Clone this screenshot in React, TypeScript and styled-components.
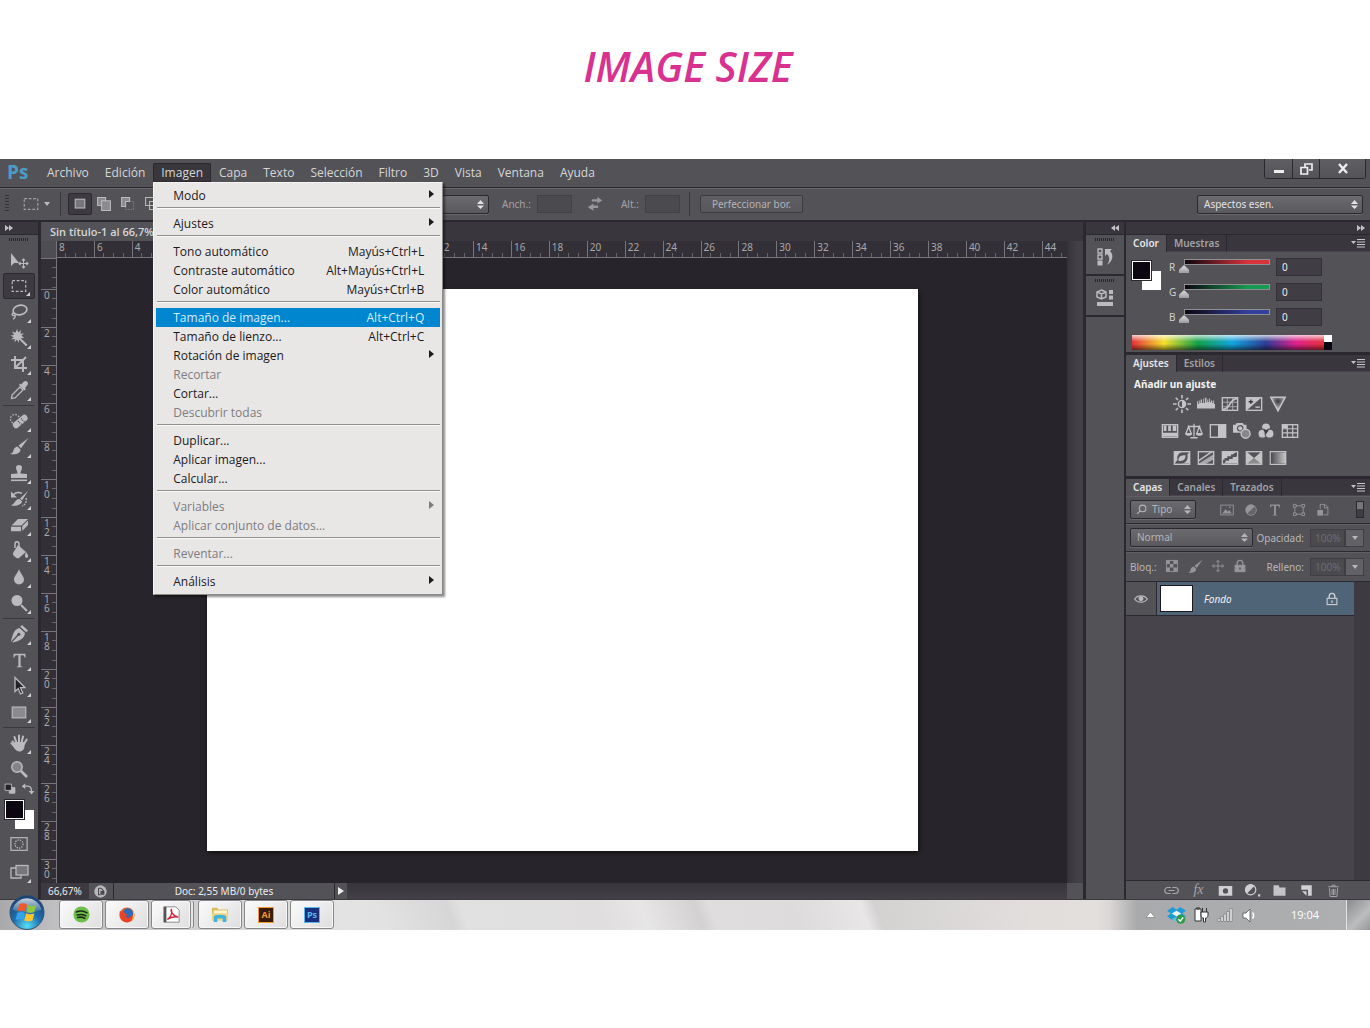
import React from "react";
import styled, { createGlobalStyle, css } from "styled-components";

const c = {
  panel: "#535257",
  panelDark: "#39373d",
  edge: "#2b292f",
  light: "#6a696e",
  stage: "#28242b",
  text: "#d6d6d8",
  dim: "#a3a2a6",
  icon: "#bbbbbe",
  menu: "#e9e7e6",
  accent: "#0086cf",
};

const ui = `"Open Sans", "Noto Sans", sans-serif`;
const small = `"Noto Sans", "Open Sans", sans-serif`;

const GlobalStyle = createGlobalStyle`
  *, *::before, *::after { box-sizing: border-box; }
  body { margin: 0; background: #fff; font-family: ${ui}; }
  button, input, select { font: inherit; color: inherit; margin: 0; padding: 0; border: 0; border-radius: 0; background: none; }
  svg { display: block; flex: none; }
`;

const Title = styled.h1`
  margin: 0;
  padding: 42px 0 69px 6px;
  text-align: center;
  font: italic 600 41px/48px ${ui};
  color: #d9318f;
`;

const AppWindow = styled.main`
  display: flex;
  flex-direction: column;
  background: ${c.panel};
  color: ${c.text};
`;

/* ---------- menu bar ---------- */
const MenuBar = styled.header`
  display: flex;
  height: 29px;
  border-bottom: 1px solid ${c.edge};
`;
const Logo = styled.span`
  width: 39px;
  padding-left: 7px;
  font: 700 19px/26px ${ui};
  color: #4b9dc5;
`;
const MenuNav = styled.nav`
  display: flex;
  align-items: flex-start;
  padding-top: 4px;
`;
const MenuSlot = styled.div`
  position: relative;
`;
const MenuButton = styled.button<{ $open?: boolean }>`
  display: block;
  height: 19px;
  padding: 0 8px;
  font-size: 12px;
  line-height: 19px;
  ${(p) => p.$open && css`
    background: #39363c;
    box-shadow: inset 0 0 0 1px ${c.edge};
    border-radius: 2px 2px 0 0;
  `}
`;
const Popup = styled.div`
  position: absolute;
  z-index: 5;
  top: 19px;
  left: 0;
  width: 290px;
  padding: 3px 2px;
  border: 1px solid #f6f5f4;
  border-right-color: #8c8b8b;
  border-bottom-color: #8c8b8b;
  background: ${c.menu};
  box-shadow: 2px 2px 2px rgba(0, 0, 0, 0.45);
`;
const PopupItem = styled.button<{ $active?: boolean }>`
  display: flex;
  align-items: center;
  width: 100%;
  height: 19px;
  padding: 0 6px 0 17px;
  font-size: 12px;
  line-height: 19px;
  text-align: left;
  color: ${(p) => (p.$active ? "#d5ecfa" : "#1c1a1c")};
  background: ${(p) => (p.$active ? c.accent : "none")};
  &:disabled { color: #7d7c80; }
`;
const Shortcut = styled.span`
  margin-left: auto;
  padding-right: 10px;
`;
const SubArrow = styled.svg`
  margin: 0 0 4px auto;
  fill: currentColor;
`;
const Rule = styled.hr`
  height: 2px;
  margin: 2px 0 5px 1px;
  border: 0;
  border-top: 1px solid #918f90;
  border-bottom: 1px solid #fafafa;
`;
const WindowControls = styled.div`
  display: flex;
  margin: 0 4px 0 auto;
  height: 20px;
  border: 1px solid ${c.edge};
  border-top: 0;
  border-radius: 0 0 3px 3px;
`;
const WindowButton = styled.button<{ $wide?: boolean }>`
  display: grid;
  place-items: center;
  width: ${(p) => (p.$wide ? 46 : 27)}px;
  background: linear-gradient(#605f64, #535257);
  & + & { border-left: 1px solid ${c.edge}; }
`;

/* ---------- options bar ---------- */
const OptionsBar = styled.div`
  display: flex;
  align-items: center;
  height: 34px;
  padding: 0 7px 1px 5px;
  border-top: 1px solid ${c.light};
  border-bottom: 2px solid ${c.edge};
  font: 10px/14px ${small};
  color: ${c.dim};
`;
const VGrip = styled.span`
  width: 4px;
  height: 18px;
  margin-right: 13px;
  background: repeating-linear-gradient(#333138 0 1px, transparent 1px 3px);
`;
const VRule = styled.span`
  width: 1px;
  height: 24px;
  margin: 0 7px;
  background: #3a383e;
`;
const IconButton = styled.button<{ $on?: boolean; $slim?: boolean }>`
  display: grid;
  place-items: center;
  width: ${(p) => (p.$slim ? 12 : 24)}px;
  height: 22px;
  color: ${c.icon};
  ${(p) => p.$slim && css`
    box-sizing: content-box;
    padding-left: 1px;
  `}
  ${(p) => p.$on && css`
    background: #3d3b41;
    border: 1px solid ${c.edge};
    border-radius: 2px;
  `}
`;
const SelectBox = styled.span<{ $w: number; $dim?: boolean }>`
  position: relative;
  flex: none;
  width: ${(p) => p.$w}px;
  height: 19px;
  border: 1px solid ${c.edge};
  border-radius: 2px;
  background: linear-gradient(#6b6a6f, #5a595e);
  box-shadow: 0 1px 0 ${c.light};
  color: ${(p) => (p.$dim ? "#b5b5b7" : "#e2e2e4")};
  select {
    appearance: none;
    width: 100%;
    height: 17px;
    padding: 0 6px;
    font: 10px/17px ${small};
  }
  svg { position: absolute; right: 4px; top: 4px; pointer-events: none; }
`;
const Field = styled.label`
  display: flex;
  align-items: center;
  gap: 6px;
`;
const SizeFields = styled.div`
  display: flex;
  align-items: center;
  margin: 0 2px 0 13px;
`;
const SizeInput = styled.input`
  width: 35px;
  height: 18px;
  border: 1px solid #434147;
  background: #4b4a4f;
`;
const Swap = styled.button`
  margin: 0 18px 0 15px;
  color: #98979b;
`;
const EdgeButton = styled.button`
  height: 18px;
  margin-left: 3px;
  padding: 0 11px;
  border: 1px solid #3d3b41;
  border-radius: 2px;
  background: linear-gradient(#5f5e63, #58575c);
  color: #b3b3b6;
`;
const Push = styled.span`
  margin-left: auto;
`;

/* ---------- workspace ---------- */
const Workspace = styled.div`
  display: flex;
  background: ${c.panelDark};
`;
const ToolColumn = styled.aside`
  display: flex;
  flex-direction: column;
  align-items: center;
  width: 41px;
  border-right: 3px solid ${c.edge};
  background: ${c.panel};
`;
const DarkHead = styled.div<{ $end?: boolean }>`
  display: flex;
  flex: none;
  align-items: center;
  align-self: stretch;
  justify-content: ${(p) => (p.$end ? "flex-end" : "flex-start")};
  height: 13px;
  padding: 0 5px 1px;
  background: ${c.panelDark};
  border-bottom: 1px solid ${c.edge};
  color: #c5c5c8;
`;
const HGrip = styled.span`
  flex: none;
  width: 20px;
  height: 3px;
  margin: 3px 0 6px;
  background: repeating-linear-gradient(90deg, #29272c 0 1px, transparent 1px 2px);
`;
const ToolGroup = styled.div`
  display: flex;
  flex-direction: column;
  width: 32px;
  & + & {
    margin-top: 2px;
    padding-top: 2px;
    border-top: 1px solid #3b393f;
  }
`;
const Tool = styled.button<{ $on?: boolean; $plain?: boolean }>`
  position: relative;
  display: grid;
  place-items: center;
  height: 26px;
  color: ${c.icon};
  ${(p) => p.$on && css`
    background: #3d3b41;
    border: 1px solid ${c.edge};
    border-radius: 2px;
  `}
  ${(p) => !p.$plain && css`
    &::after {
      content: "";
      position: absolute;
      right: 4px;
      bottom: 2px;
      border-left: 4px solid transparent;
      border-bottom: 4px solid #d2d2d4;
    }
  `}
`;
const MiniRow = styled.div`
  display: flex;
  justify-content: space-between;
  width: 32px;
  margin-bottom: 4px;
  color: ${c.icon};
`;
const Swatches = styled.div`
  position: relative;
  flex: none;
  width: 29px;
  height: 29px;
  &::before, &::after { content: ""; position: absolute; width: 19px; height: 19px; }
  &::before { right: 0; bottom: 0; background: #fff; }
  &::after { left: 0; top: 0; background: #0b060f; border: 1px solid #fff; box-shadow: 0 0 0 1px ${c.edge}; }
`;
const ModeButtons = styled.div`
  display: flex;
  flex-direction: column;
  gap: 2px;
  width: 32px;
  padding-top: 2px;
`;

const Doc = styled.section`
  display: flex;
  flex: 1;
  flex-direction: column;
  min-width: 0;
  border-right: 2px solid ${c.edge};
`;
const TabStrip = styled.div`
  display: flex;
  height: 19px;
  background: ${c.panelDark};
`;
const DocTab = styled.button`
  padding: 0 8px 0 9px;
  background: ${c.panel};
  font: 600 11px/20px ${ui};
  color: ${c.text};
`;
const DocBody = styled.div`
  display: flex;
`;
const DocGrid = styled.div`
  display: grid;
  flex: 1;
  grid-template: 17px auto / 16px minmax(0, 1fr);
  min-width: 0;
`;
const RulerCorner = styled.div`
  background: #4e4d52;
  border-right: 1px solid #77757b;
`;
const TopRuler = styled.div`
  display: grid;
  grid-template-columns: repeat(26, 3fr) 2fr;
  margin-left: -1px;
  border-bottom: 1px solid #77757b;
  background: #332f36;
`;
const TopCell = styled.span`
  min-width: 0;
  overflow: hidden;
  padding-left: 2px;
  border-left: 1px solid #77757b;
  background: linear-gradient(90deg, transparent 8px, #66646a 8px 9px, transparent 9px 18px, #66646a 18px 19px, transparent 19px 28px, #66646a 28px 29px, transparent 29px) 0 100% / 100% 4px no-repeat;
  font: 10px/12px ${small};
  color: #a9a8ab;
`;
const SideRuler = styled.div`
  display: grid;
  grid-template-rows: 31px repeat(15, 38px) 1fr;
  border-right: 1px solid #77757b;
  background: #332f36;
`;
const SideCell = styled.span`
  min-height: 0;
  overflow: hidden;
  padding: 1px 7px 0 3px;
  border-top: 1px solid #77757b;
  background: linear-gradient(transparent 8px, #66646a 8px 9px, transparent 9px 18px, #66646a 18px 19px, transparent 19px 28px, #66646a 28px 29px, transparent 29px) 100% 0 / 4px 100% no-repeat;
  font: 10px/9px ${small};
  color: #a9a8ab;
  word-break: break-all;
`;
const Stage = styled.div`
  display: flex;
  justify-content: center;
  padding: 31px 0 32px;
  background: ${c.stage};
`;
const Artboard = styled.div`
  width: 711px;
  aspect-ratio: 711 / 562;
  background: #fff;
  box-shadow: 1px 2px 5px rgba(0, 0, 0, 0.6);
`;
const ScrollTrack = styled.div`
  width: 16px;
  border-left: 1px solid #343137;
  background: linear-gradient(90deg, #37353b, #434147 60%);
`;
const StatusBar = styled.div`
  display: flex;
  align-items: center;
  height: 16px;
  background: ${c.panel};
  font: 10px/16px ${small};
  color: #ececee;
`;
const Zoom = styled.span`
  width: 48px;
  padding-left: 7px;
  background: #3c3a40;
`;
const DocInfo = styled.span`
  flex: 0 0 222px;
  margin-left: 2px;
  border-left: 1px solid ${c.edge};
  border-right: 1px solid ${c.edge};
  text-align: center;
`;
const StatusButton = styled.button<{ $slim?: boolean }>`
  display: grid;
  place-items: center;
  width: ${(p) => (p.$slim ? 12 : 22)}px;
`;
const HScroll = styled.span`
  flex: 1;
  align-self: stretch;
  margin-right: 16px;
  background: linear-gradient(#37353b, #434147);
`;

/* ---------- right dock ---------- */
const Dock = styled.aside`
  display: flex;
  background: ${c.edge};
`;
const IconDock = styled.div`
  display: flex;
  flex-direction: column;
  width: 38px;
  margin-left: 1px;
  background: ${c.panel};
`;
const DockItem = styled.button`
  display: flex;
  flex-direction: column;
  align-items: center;
  height: 41px;
  border-bottom: 2px solid ${c.edge};
  color: ${c.icon};
`;
const PanelDock = styled.div`
  display: flex;
  flex-direction: column;
  width: 246px;
  padding-left: 2px;
`;
const Panel = styled.section<{ $grow?: boolean }>`
  display: flex;
  flex-direction: column;
  flex: ${(p) => (p.$grow ? 1 : "none")};
  background: ${c.panel};
  font: 10px/14px ${small};
  & + & { margin-top: 3px; }
`;
const Tabs = styled.div`
  display: flex;
  align-items: center;
  height: 17px;
  padding-right: 5px;
  background: ${c.panelDark};
  border-bottom: 1px solid #49474d;
`;
const PanelTab = styled.button<{ $on?: boolean }>`
  height: 17px;
  padding: 0 7px;
  border-right: 1px solid ${c.edge};
  background: ${(p) => (p.$on ? c.panel : "transparent")};
  color: ${(p) => (p.$on ? "#e6e6e8" : c.dim)};
  font: 600 10px/16px ${small};
`;
const PanelMenu = styled.button`
  margin-left: auto;
  color: #c5c5c8;
`;
const ColorBody = styled.div`
  display: flex;
  gap: 8px;
  height: 83px;
  padding: 9px 48px 0 6px;
`;
const Channels = styled.div`
  display: flex;
  flex: 1;
  flex-direction: column;
  margin-top: -7px;
`;
const Channel = styled.label`
  display: grid;
  grid-template-columns: 12px 93px 46px;
  align-items: center;
  column-gap: 1px;
  height: 25px;
  color: #d0d0d2;
`;
const Range = styled.input<{ $tone: string }>`
  appearance: none;
  align-self: start;
  width: 88px;
  height: 16px;
  &::-webkit-slider-runnable-track {
    height: 6px;
    margin-left: 2px;
    border: 1px solid #8f8e92;
    background: linear-gradient(90deg, #0b060f, ${(p) => p.$tone} 75%);
  }
  &::-webkit-slider-thumb {
    appearance: none;
    width: 10px;
    height: 8px;
    margin: 5px 0 0 -6px;
    background: linear-gradient(#dedee0, #9d9ca0);
    clip-path: polygon(50% 0, 100% 60%, 100% 100%, 0 100%, 0 60%);
  }
`;
const Value = styled.input`
  width: 46px;
  height: 18px;
  padding-left: 5px;
  border: 1px solid #333137;
  background: #403e44;
  color: #e8e8ea;
  font: 10px/16px ${small};
`;
const Spectrum = styled.div`
  display: flex;
  width: 200px;
  height: 15px;
  margin: 0 0 2px 6px;
  background:
    linear-gradient(rgba(255, 255, 255, 0.75), transparent 45%, transparent 60%, rgba(0, 0, 0, 0.55)),
    linear-gradient(90deg, #e4323a, #f5e02b 16%, #12a14b 33%, #12a5de 50%, #2f3c96 67%, #e0218a 82%, #e4323a 96%);
  &::after {
    content: "";
    width: 8px;
    margin-left: auto;
    background: linear-gradient(#fff 50%, #0b060f 50%);
  }
`;
const AdjustTitle = styled.h2`
  margin: 4px 0 3px 8px;
  font: 700 10px/16px ${small};
  color: #f2f2f3;
`;
const AdjustRow = styled.div`
  display: flex;
  justify-content: center;
  gap: 6px;
  height: 27px;
  padding-right: 37px;
  button { height: 18px; color: #c4c4c6; }
`;
const LayerRowBar = styled.div<{ $h: number }>`
  display: flex;
  align-items: center;
  height: ${(p) => p.$h}px;
  padding: 0 6px 0 4px;
  border-bottom: 1px solid ${c.edge};
  box-shadow: inset 0 1px 0 #605f64;
  color: #b7b7ba;
`;
const TypeBox = styled(SelectBox)`
  select { padding-left: 21px; }
  svg:first-of-type { left: 5px; right: auto; top: 3px; }
`;
const FilterIcons = styled.div<{ $gap: number; $ml: number }>`
  display: flex;
  gap: ${(p) => p.$gap}px;
  margin-left: ${(p) => p.$ml}px;
  color: #96959a;
`;
const Toggle = styled.button`
  width: 8px;
  height: 17px;
  margin-left: auto;
  border: 1px solid ${c.edge};
  background: linear-gradient(#77767b 45%, #403e44 45%);
`;
const Percent = styled.label`
  display: flex;
  align-items: center;
  margin-left: auto;
  gap: 6px;
  input {
    width: 35px;
    height: 18px;
    padding-left: 4px;
    border: 1px solid #403e44;
    background: #4b4a4f;
    color: #6d6c71;
  }
`;
const DropButton = styled.button`
  display: grid;
  place-items: center;
  width: 19px;
  height: 18px;
  border: 1px solid #403e44;
  background: #626166;
`;
const LayerList = styled.div`
  display: flex;
  flex: 1;
  background: linear-gradient(90deg, transparent calc(100% - 16px), #3d3b41 calc(100% - 16px)), #47454b;
`;
const Layer = styled.div`
  display: flex;
  flex: 1;
  height: 34px;
  margin-right: 16px;
  border-bottom: 1px solid ${c.edge};
  background: #506478;
`;
const Eye = styled.button`
  display: grid;
  place-items: center;
  width: 31px;
  border-right: 1px solid ${c.edge};
  background: ${c.panel};
  color: ${c.icon};
`;
const Thumb = styled.span`
  width: 33px;
  height: 27px;
  margin: 3px 11px 0 3px;
  border: 1px solid #1b191f;
  background: #fff;
`;
const LayerName = styled.span`
  flex: 1;
  font: italic 10px/34px ${small};
  color: #f0f0f2;
`;
const LayerLock = styled.span`
  display: grid;
  place-items: center;
  width: 44px;
  color: #cfd3d8;
`;
const LayerFooter = styled.div`
  display: grid;
  grid-template-columns: repeat(7, 27px);
  place-items: center;
  height: 19px;
  padding-left: 32px;
  border-top: 1px solid ${c.edge};
  color: #a7a6aa;
`;
const Fx = styled.em`
  font: italic 14px/14px "Liberation Serif", serif;
`;

/* ---------- taskbar ---------- */
const Taskbar = styled.footer`
  display: flex;
  align-items: flex-start;
  height: 31px;
  border-top: 1px solid #3b393f;
  background:
    linear-gradient(70deg, transparent 28%, rgba(150, 146, 148, 0.14) 33%, transparent 34%, transparent 44%, rgba(255, 255, 255, 0.25) 47%, rgba(150, 146, 148, 0.16) 51%, transparent 52%, transparent 58%, rgba(255, 255, 255, 0.3) 63%, rgba(150, 146, 148, 0.14) 64%, transparent 75%),
    linear-gradient(90deg, #a9a9ab, #bfbfc1 4%, #e3e3e4 25%, #dedbdc 60%, #e2dfdd 80%, #dad7d6 81%, #a9aaab 83%, #aeafb0);
`;
const StartButton = styled.button`
  width: 38px;
  height: 35px;
  margin: -5px 13px 0 8px;
`;
const TaskButton = styled.button<{ $stack?: boolean }>`
  display: grid;
  place-items: center;
  width: ${(p) => (p.$stack ? 40 : 44)}px;
  height: 29px;
  margin-right: ${(p) => (p.$stack ? 7 : 2)}px;
  border: 1px solid #87868a;
  border-radius: 3px;
  background: linear-gradient(135deg, #fbfbfb, #dededf);
  box-shadow: inset 0 0 0 1px #f8f8f8${(p) => (p.$stack ? ", 3px 0 0 -1px #e6e6e6, 4px 0 0 -1px #87868a" : "")};
`;
const Tray = styled.div`
  display: flex;
  align-items: center;
  height: 30px;
  margin-left: auto;
  gap: 8px;
  color: #fff;
  svg:first-child { margin-right: 4px; }
`;
const Clock = styled.time`
  margin: 0 19px 0 25px;
  font: 11px/30px ${ui};
`;
const ShowDesktop = styled.button`
  width: 24px;
  height: 30px;
  border-left: 1px solid #e4e4e4;
  background: linear-gradient(135deg, #8a8b8d, #bcbdbe 60%, #96979a);
`;
const AppTile = styled.span<{ $bg: string; $fg: string }>`
  width: 16px;
  height: 16px;
  border: 1px solid ${(p) => p.$fg};
  background: ${(p) => p.$bg};
  color: ${(p) => p.$fg};
  font: 700 9px/13px ${ui};
  text-align: center;
`;

/* ---------- drawings ---------- */
type G = { s?: number; w?: number; h?: number; vb?: string; children: React.ReactNode };
const Ico = ({ s = 18, w, h, vb = "0 0 20 20", children }: G) => (
  <svg width={w ?? s} height={h ?? s} viewBox={vb} fill="none" stroke="currentColor" strokeWidth="1.3" aria-hidden="true">
    {children}
  </svg>
);
const F = { fill: "currentColor", stroke: "none" };

const UpDown = () => (
  <svg width="7" height="9" viewBox="0 0 7 9" fill="currentColor" aria-hidden="true"><path d="M0 4 3.5 0 7 4zM0 5.5h7L3.5 9z" /></svg>
);
const Down = () => (
  <svg width="6" height="4" viewBox="0 0 6 4" fill="currentColor" aria-hidden="true"><path d="M0 0h6L3 4z" /></svg>
);
const Chevrons = ({ left }: { left?: boolean }) => (
  <svg width="8" height="6" viewBox="0 0 8 6" fill="currentColor" aria-hidden="true">
    <path d={left ? "M4 0v6L0 3zM8 0v6L4 3z" : "M0 0v6l4-3zM4 0v6l4-3z"} />
  </svg>
);
const MarqueeIcon = () => <Ico s={18}><rect x="2.5" y="4" width="15" height="12" strokeDasharray="3 2" /></Ico>;
const BrushIcon = ({ s }: { s?: number }) => (
  <Ico s={s ?? 20}><path {...F} d="M19.500 1 9.500 8.500l2.500 2.800zM8.500 9.500l3 3c0 3.500-4 5.500-10.500 4.500 3-1 3-2 3.500-4 .5-2 2-3 4-3.500z" /></Ico>
);
const MoveCross = () => <Ico s={14}><path d="M10 2v16M2 10h16M7.500 4.500 10 2l2.500 2.500M7.500 15.500 10 18l2.500-2.500M4.500 7.500 2 10l2.500 2.500M15.500 7.500 18 10l-2.500 2.500" /></Ico>;
const LockIcon = ({ outline }: { outline?: boolean }) => (
  <Ico s={14}>
    <path d="M6 9V6a4 4 0 0 1 8 0v3" strokeWidth="2" />
    <rect x="3" y="9" width="14" height="9" fill={outline ? "none" : "currentColor"} strokeWidth="1.500" />
    <path d="M10 12v3.500" stroke={outline ? "currentColor" : c.panel} strokeWidth="2" />
  </Ico>
);
const SerifT = ({ s }: { s: number }) => (
  <Ico s={s}><path {...F} d="M3 2h14v4.500h-1c-.5-2-1-2.700-2.500-2.700h-2.200v12c0 1 .5 1.300 2 1.400V18H6.700v-.8c1.500-.1 2-.4 2-1.400v-12H6.500C5 3.800 4.500 4.500 4 6.500H3z" /></Ico>
);

const tools1: [string, React.ReactNode][] = [
  ["Mover", <Ico s={20}><path {...F} d="M2 3v13l3.300-3H10z" /><path d="M14.500 8.500v10M9.500 13.500h10M13 10.500 14.500 9l1.500 1.500M13 16.500l1.500 1.500 1.500-1.500M11.500 12 10 13.500l1.500 1.500M17.500 12l1.500 1.500-1.500 1.500" strokeWidth="1.100" /></Ico>],
  ["Marco rectangular", <MarqueeIcon />],
  ["Lazo", <Ico s={20}><ellipse cx="11" cy="8" rx="7" ry="4.700" transform="rotate(-12 11 8)" strokeWidth="1.700" /><path d="M5 11c-2.500 0-2.500 3 0 2.500s1 3-1 3.500" strokeWidth="1.400" /></Ico>],
  ["Varita mágica", <Ico s={20}><path {...F} d="m8 1 1.300 3.500L12 2l-.5 3.800L15 5.500l-2.700 2.300 3 2-3.500.4 6.700 6.600-1.500 1.500-6.800-6.700L9.500 15 8 11.600 5.500 14.500 5.800 11 2 11.500l2.700-2.300L1.500 7.500l3.600-.5L3 3.500l3.500 1.300z" /></Ico>],
  ["Recortar", <Ico s={20}><path d="M6 2v12h12M2 6h12v12M7 13 17 3" strokeWidth="1.900" /></Ico>],
  ["Cuentagotas", <Ico s={20}><path d="m11 7 3 3-8 8-3.500.5.500-3.500z" /><path {...F} d="m10 5 5.500 5.500L17 9l-1-1 2.500-3a2.500 2.500 0 0 0-3.500-3.500L12 4.500l-1-1z" /></Ico>],
];
const tools2: [string, React.ReactNode][] = [
  ["Pincel corrector", <Ico s={20}><circle cx="6" cy="8" r="4.500" strokeDasharray="1.500 1.500" /><rect {...F} x="3" y="7.500" width="17" height="6.500" rx="3" transform="rotate(-40 11 11)" /><path d="m9 10 4 4M12 7.500l4 4" stroke={c.panel} strokeDasharray="1 1" /></Ico>],
  ["Pincel", <BrushIcon />],
  ["Tampón de clonar", <Ico s={20}><path {...F} d="M8.500 10.500C8.500 8 7 7 7 5a3 3 0 0 1 6 0c0 2-1.500 3-1.500 5.500L18 11v4H2v-4z" /><path d="M2 17.300h16" strokeWidth="1.600" /></Ico>],
  ["Pincel de historia", <Ico s={20}><path {...F} d="m19 2-8 7.500 2 2zM10.500 10 13 12.500c-.5 3-5 5-11 4 4-1.500 4-6.500 8.500-6.500z" /><path d="M4 6c3-3 7-3 9-1.500" strokeWidth="1.500" /><path {...F} d="M2 2.500v6h6z" /><path d="M17 9c1 4-1 7-4 8" strokeDasharray="2 1" /></Ico>],
  ["Borrador", <Ico s={20}><path {...F} d="M9 4h10l-6.500 6.500h-10zM2 11.800h10v4.500H2zM13.200 11.200 19 5.500v4.500l-5.800 6z" /></Ico>],
  ["Bote de pintura", <Ico s={20}><path {...F} d="m9 4 8 7-7 6c-2 1.500-7-3-6-5z" /><path d="M10 9V3c0-3-4-3-4 0v4" strokeWidth="1.500" /><path {...F} d="M17 11c1.500 2 2.500 3.500 2 5s-3 1-3-1 .5-2.500 1-4z" /></Ico>],
  ["Desenfocar", <Ico s={20}><path {...F} d="M10 2c1 4 5 7 5 10.500a5 5 0 0 1-10 0C5 9 9 6 10 2z" /></Ico>],
  ["Sobreexponer", <Ico s={20}><circle {...F} cx="8" cy="7.500" r="5.500" /><path d="m12 12 6 6" strokeWidth="2" /></Ico>],
];
const tools3: [string, React.ReactNode][] = [
  ["Pluma", (
    <Ico s={20}>
      <path {...F} d="m13 1 6 5.500-1.800 1.800-6-5.500z" />
      <path {...F} d="m10.500 4 5.500 5c-.5 5-4.500 7.500-12 9.500L2 17C4 9.500 5.500 5 10.500 4z" />
      <path d="m3 17.500 6-6.500" stroke={c.panel} />
      <circle cx="9.800" cy="10.300" r="1.600" fill={c.panel} stroke="none" />
    </Ico>
  )],
  ["Texto", <SerifT s={17} />],
  ["Selección directa", <Ico s={20}><path d="M6 1.500v14l3.200-3 2.300 5.500 2.300-1-2.300-5.300H16z" fill="#232127" /></Ico>],
  ["Rectángulo", <Ico s={18}><rect x="2.500" y="4.500" width="15" height="12" fill="#8b8a8f" /></Ico>],
];
const tools4: [string, React.ReactNode][] = [
  ["Mano", <Ico s={20}><path d="m7 12-3.500-3.500M7.500 10 5.500 4M10 9.500V2.500M12.500 10 14 3.500M14.500 12l3.200-5.500" strokeWidth="2" strokeLinecap="round" /><path {...F} d="M1 10c2-1.500 3.500.5 5 2L6.500 9h8.500l.5 4c0 3-2 5.500-5 5.500-4 0-5-4-9.500-8.500z" /></Ico>],
  ["Zoom", <Ico s={20}><circle cx="8" cy="8" r="5.200" strokeWidth="1.500" fill="#85848a" /><path d="m12 12 6 6" strokeWidth="2.700" /></Ico>],
];

const Frame = ({ children }: { children?: React.ReactNode }) => (
  <Ico s={18}><rect x="1.500" y="3" width="17" height="14" strokeWidth="1.500" />{children}</Ico>
);
const adjustRows: [string, React.ReactNode][][] = [
  [
    ["Brillo", <Ico><circle cx="10" cy="10" r="4" strokeWidth="1.500" /><path {...F} d="M10 6a4 4 0 0 1 0 8z" /><path d="M10 0v4M10 16v4M0 10h4M16 10h4M3 3l2.500 2.500M14.500 14.500 17 17M3 17l2.500-2.500M14.500 5.500 17 3" strokeWidth="1.800" /></Ico>],
    ["Niveles", <Ico><path {...F} d="M0 15V7h1v3h1V6h1v3h1V5h1.500v4H7V4h1v5h1V3h1.500v5h1V5h1v3h1V4h1v4h1V6h1.500v3h1V6h1v4h1v5z" /></Ico>],
    ["Curvas", <Frame><path d="M1 8h18M1 13h18M7 3v14M13 3v14" strokeWidth=".8" /><path d="M2 16c9 0 7-12 16-12" strokeWidth="1.800" /></Frame>],
    ["Exposición", <Frame><path {...F} d="M2 3h16L2 17z" /><path d="M4 7.500h5M6.500 5v5" stroke="#3d3b41" strokeWidth="1.500" /><path d="M11.500 13.500h5" strokeWidth="1.600" /></Frame>],
    ["Intensidad", (
      <Ico>
        <defs><radialGradient id="vib" cy=".3"><stop stopColor="#3d3b41" /><stop offset="1" stopColor="#a7a6aa" /></radialGradient></defs>
        <path d="M2 2.500h16L10 17.500z" fill="url(#vib)" strokeWidth="1.700" />
      </Ico>
    )],
  ],
  [
    ["Tono", <Frame><path {...F} d="M2 12h16v4H2zM3 4h3v6H3zM8 4h3v6H8zM13 4h4v6h-4z" /></Frame>],
    ["Equilibrio de color", <Ico><path d="M10 2v14M6 17.500h8M3 5h14M4 5 1 13h6zM16 5l-3 8h6z" strokeWidth="1.400" /><path {...F} d="M0 13h8c-1 3-7 3-8 0zM12 13h8c-1 3-7 3-8 0z" /></Ico>],
    ["Blanco y negro", <Frame><path {...F} d="M10 3h8v14h-8z" /></Frame>],
    ["Filtro de fotografía", <Ico><path {...F} d="M0 3h3l1-2h7l1 2h3v9H0z" /><circle cx="8" cy="7" r="3" stroke={c.panel} /><circle cx="14" cy="13" r="5" fill="#88878c" strokeWidth="1.500" /></Ico>],
    ["Mezclador de canales", <Ico><circle cx="10" cy="6" r="5" fill="currentColor" stroke={c.panel} /><circle cx="6" cy="13" r="5" fill="currentColor" stroke={c.panel} /><circle cx="14" cy="13" r="5" fill="currentColor" stroke={c.panel} /><path fill="#3d3b41" stroke="none" d="M7 9h6l-3 5z" /></Ico>],
    ["Consulta de colores", <Frame><path d="M2 7.500h16M2 12h16M7 3v14M13 3v14" /><path {...F} d="M2 3h5v4H2z" /></Frame>],
  ],
  [
    ["Invertir", <Frame><path {...F} d="M2 3h9c-5 1-7 5-6 9l-3 4zM18 4v12H9c6 0 8-5 7-10zM6 13c0-5 3-6 8-6 0 5-3 7-8 6z" /></Frame>],
    ["Posterizar", <Frame><path {...F} d="M2 12 15 3h3L2 14z" /><path {...F} opacity=".75" d="M2 17v-1L18 6v6l-9 5z" /></Frame>],
    ["Umbral", <Frame><path {...F} d="M2 3h15l-4 3h-2v2H7v2H4v2H2zM18 7v9H2l3-1v-2h4v-2h4V9h4z" /></Frame>],
    ["Corrección selectiva", <Frame><path {...F} d="m2 3 8 7-8 7zM18 3l-8 7 8 7z" /><path {...F} opacity=".5" d="m2 17 8-7 8 7z" /></Frame>],
    ["Mapa de degradado", (
      <Frame>
        <defs><linearGradient id="gm"><stop stopColor="#4a494e" /><stop offset="1" stopColor="#c4c4c6" /></linearGradient></defs>
        <rect x="2" y="4" width="16" height="12" fill="url(#gm)" stroke="none" />
      </Frame>
    )],
  ],
];

type Entry = { t: string; k?: string; sub?: boolean; off?: boolean; active?: boolean };
const imageMenu: Entry[][] = [
  [{ t: "Modo", sub: true }],
  [{ t: "Ajustes", sub: true }],
  [{ t: "Tono automático", k: "Mayús+Ctrl+L" }, { t: "Contraste automático", k: "Alt+Mayús+Ctrl+L" }, { t: "Color automático", k: "Mayús+Ctrl+B" }],
  [
    { t: "Tamaño de imagen...", k: "Alt+Ctrl+Q", active: true },
    { t: "Tamaño de lienzo...", k: "Alt+Ctrl+C" },
    { t: "Rotación de imagen", sub: true },
    { t: "Recortar", off: true },
    { t: "Cortar..." },
    { t: "Descubrir todas", off: true },
  ],
  [{ t: "Duplicar..." }, { t: "Aplicar imagen..." }, { t: "Calcular..." }],
  [{ t: "Variables", sub: true, off: true }, { t: "Aplicar conjunto de datos...", off: true }],
  [{ t: "Reventar...", off: true }],
  [{ t: "Análisis", sub: true }],
];
const menus = ["Archivo", "Edición", "Imagen", "Capa", "Texto", "Selección", "Filtro", "3D", "Vista", "Ventana", "Ayuda"];
/* the marks behind the open menu carry no number */
const topMarks = [8, 6, 4, ...Array<null>(7).fill(null), ...Array.from({ length: 17 }, (_, i) => 12 + i * 2)];
const sideMarks = Array.from({ length: 16 }, (_, i) => i * 2);

const ToolSet = ({ items, on, plain }: { items: [string, React.ReactNode][]; on?: string; plain?: string }) => (
  <ToolGroup>
    {items.map(([name, icon]) => (
      <Tool key={name} aria-label={name} $on={name === on} $plain={name === plain}>{icon}</Tool>
    ))}
  </ToolGroup>
);

const PanelHead = ({ tabs }: { tabs: string[] }) => (
  <Tabs>
    {tabs.map((t, i) => <PanelTab key={t} $on={i === 0}>{t}</PanelTab>)}
    <PanelMenu aria-label="Menú del panel">
      <svg width="14" height="9" viewBox="0 0 14 9" fill="currentColor" aria-hidden="true"><path d="M0 2h5L2.500 5zM6 0h8v1H6zM6 2.500h8v1H6zM6 5h8v1H6zM6 7.500h8v1H6z" /></svg>
    </PanelMenu>
  </Tabs>
);

export default function App() {
  return (
    <>
      <GlobalStyle />
      <Title>IMAGE SIZE</Title>
      <AppWindow>
        <MenuBar>
          <Logo>Ps</Logo>
          <MenuNav>
            {menus.map((m) => (
              <MenuSlot key={m}>
                <MenuButton $open={m === "Imagen"}>{m}</MenuButton>
                {m === "Imagen" && (
                  <Popup>
                    {imageMenu.map((group, i) => (
                      <React.Fragment key={i}>
                        {i > 0 && <Rule />}
                        {group.map((e) => (
                          <PopupItem key={e.t} disabled={e.off} $active={e.active}>
                            {e.t}
                            {e.k && <Shortcut>{e.k}</Shortcut>}
                            {e.sub && <SubArrow width="5" height="8" viewBox="0 0 5 8"><path d="M0 0v8l5-4z" /></SubArrow>}
                          </PopupItem>
                        ))}
                      </React.Fragment>
                    ))}
                  </Popup>
                )}
              </MenuSlot>
            ))}
          </MenuNav>
          <WindowControls>
            <WindowButton aria-label="Minimizar"><svg width="12" height="12" viewBox="0 0 12 12"><path d="M1 7h10v3H1z" fill="#eee" /></svg></WindowButton>
            <WindowButton aria-label="Restaurar"><svg width="13" height="12" viewBox="0 0 13 12" fill="none" stroke="#eee" strokeWidth="1.700"><path d="M5 4V1h7v6H9M1 4.500h6.500V11H1z" /></svg></WindowButton>
            <WindowButton $wide aria-label="Cerrar"><svg width="12" height="11" viewBox="0 0 12 11" stroke="#eee" strokeWidth="2.400"><path d="m2 1 8 9M10 1 2 10" /></svg></WindowButton>
          </WindowControls>
        </MenuBar>

        <OptionsBar>
          <VGrip />
          <MarqueeIcon />
          <IconButton $slim aria-label="Ajustes de herramienta"><Down /></IconButton>
          <VRule />
          <IconButton $on aria-label="Selección nueva"><Ico s={16}><rect x="4" y="4" width="12" height="11" fill="#77767b" /></Ico></IconButton>
          <IconButton aria-label="Añadir a selección"><Ico s={16}><path d="M2 2h10v4h6v12H7v-6H2z" fill="#8b8a8f" /><path d="M7 12V6h5" /></Ico></IconButton>
          <IconButton aria-label="Restar de selección"><Ico s={16}><path d="M2 2h10v5H7v6H2z" fill="#8b8a8f" /><path d="M7 7h10v10H7z" strokeDasharray="1 1" opacity=".5" /></Ico></IconButton>
          <IconButton aria-label="Formar intersección"><Ico s={16}><path d="M2 2h10v10H2zM7 7h10v10H7z" /></Ico></IconButton>
          <SelectBox $w={325}><select aria-label="Estilo" /><UpDown /></SelectBox>
          <SizeFields>
            <Field>Anch.:<SizeInput disabled /></Field>
            <Swap aria-label="Intercambiar"><Ico s={16}><path {...F} d="M6 4h7V1l6 4.500-6 4V7H6zM14 12H8V9.500L1 14l7 4.500V15h6z" /></Ico></Swap>
            <Field>Alt.:<SizeInput disabled /></Field>
          </SizeFields>
          <VRule />
          <EdgeButton>Perfeccionar bor.</EdgeButton>
          <Push />
          <SelectBox $w={166}>
            <select aria-label="Espacio de trabajo"><option>Aspectos esen.</option></select>
            <UpDown />
          </SelectBox>
        </OptionsBar>

        <Workspace>
          <ToolColumn>
            <DarkHead><Chevrons /></DarkHead>
            <HGrip />
            <ToolSet items={tools1} on="Marco rectangular" plain="Mover" />
            <ToolSet items={tools2} />
            <ToolSet items={tools3} />
            <ToolSet items={tools4} plain="Zoom" />
            <MiniRow>
              <Ico s={14}><path d="M9 8h8v8H9z" fill="#bbb" /><path d="M3 3h9v9H3z" fill="#232127" /></Ico>
              <Ico s={14}><path d="M4 6h6c4 0 5 3 5 8" strokeWidth="1.800" /><path {...F} d="M6 2v8L1 6zM11 13h8l-4 5z" /></Ico>
            </MiniRow>
            <Swatches />
            <ModeButtons>
              <Tool $plain aria-label="Máscara rápida"><Ico s={18}><rect x="1" y="3" width="18" height="14" /><circle cx="10" cy="10" r="4.500" strokeDasharray="1.500 1.200" /></Ico></Tool>
              <Tool aria-label="Modo de pantalla"><Ico s={20}><path d="M7 6H2v10h10v-3" /><rect x="7" y="3.500" width="12" height="9.500" fill="#77767b" /></Ico></Tool>
            </ModeButtons>
          </ToolColumn>

          <Doc>
            <TabStrip><DocTab>Sin título-1 al 66,7%</DocTab></TabStrip>
            <DocBody>
              <DocGrid>
                <RulerCorner />
                <TopRuler>{topMarks.map((n, i) => <TopCell key={i}>{n}</TopCell>)}</TopRuler>
                <SideRuler><SideCell />{sideMarks.map((n) => <SideCell key={n}>{n}</SideCell>)}</SideRuler>
                <Stage><Artboard /></Stage>
              </DocGrid>
              <ScrollTrack />
            </DocBody>
            <StatusBar>
              <Zoom>66,67%</Zoom>
              <StatusButton aria-label="Vista previa"><Ico s={13}><circle cx="10" cy="10" r="9.500" fill="#b9b8bb" stroke="none" /><path d="M7 5h4l4 4M7 5v10h3" stroke="#4a494e" strokeWidth="1.600" /><path d="M10 9h6v6h-6z" fill="#4a494e" stroke="none" /></Ico></StatusButton>
              <DocInfo>Doc: 2,55 MB/0 bytes</DocInfo>
              <StatusButton $slim aria-label="Más"><svg width="6" height="8" viewBox="0 0 6 8"><path d="M0 0v8l6-4z" fill="#eee" /></svg></StatusButton>
              <HScroll />
            </StatusBar>
          </Doc>

          <Dock>
            <IconDock>
              <DarkHead $end><Chevrons left /></DarkHead>
              <DockItem aria-label="Historia"><HGrip /><Ico s={20}><path d="M3 2h4v4H3zM3 8h4v4H3z" /><path {...F} d="M2.500 13.500h5v5h-5zM10 2h7l-2 2c4 4 3 10-3 14 3-5 3-8 0-11l-2 2z" /></Ico></DockItem>
              <DockItem aria-label="Propiedades"><HGrip /><Ico s={20}><path d="m6.500 2 4.500 2v5l-4.500 2L2 9V4zM2 4l4.500 2L11 4M6.500 6v5" strokeWidth="1.500" /><path {...F} d="M14 2h4v4h-4zM14 7.500h4v4h-4zM2 14h16v4H2z" /></Ico></DockItem>
            </IconDock>
            <PanelDock>
              <DarkHead $end><Chevrons /></DarkHead>
              <Panel>
                <PanelHead tabs={["Color", "Muestras"]} />
                <ColorBody>
                  <Swatches />
                  <Channels>
                    {([["R", "#d8333b"], ["G", "#179a51"], ["B", "#34409c"]] as const).map(([l, tone]) => (
                      <Channel key={l}>
                        {l}
                        <Range type="range" min={0} max={255} defaultValue={0} $tone={tone} aria-label={l} />
                        <Value defaultValue="0" aria-label={l} />
                      </Channel>
                    ))}
                  </Channels>
                </ColorBody>
                <Spectrum />
              </Panel>
              <Panel>
                <PanelHead tabs={["Ajustes", "Estilos"]} />
                <AdjustTitle>Añadir un ajuste</AdjustTitle>
                {adjustRows.map((row, i) => (
                  <AdjustRow key={i}>{row.map(([name, icon]) => <button key={name} aria-label={name}>{icon}</button>)}</AdjustRow>
                ))}
              </Panel>
              <Panel $grow>
                <PanelHead tabs={["Capas", "Canales", "Trazados"]} />
                <LayerRowBar $h={28}>
                  <TypeBox $w={66} $dim>
                    <Ico s={11}><circle cx="12" cy="8" r="6" strokeWidth="2" /><path d="m8 12-6 6" strokeWidth="2" /></Ico>
                    <select aria-label="Filtro"><option>Tipo</option></select>
                    <UpDown />
                  </TypeBox>
                  <FilterIcons $gap={10} $ml={24}>
                    <Ico s={14}><rect x="1" y="3" width="18" height="14" /><path {...F} d="m3 15 5-6 3 3 2-2 4 5zM13 5h2v2h-2z" /></Ico>
                    <Ico s={14}><circle cx="10" cy="10" r="7.500" fill="currentColor" /><path d="M15 5 5 15a7 7 0 0 0 10-10z" fill="#66656a" stroke="none" /></Ico>
                    <SerifT s={14} />
                    <Ico s={14}><path d="M4 4h12v12H4z" /><path d="M2 2h4v4H2zM14 2h4v4h-4zM2 14h4v4H2zM14 14h4v4h-4z" fill={c.panel} /></Ico>
                    <Ico s={14}><path d="M6 9V2h7l4 4v11h-6M12 2v5h5" /><path {...F} d="M2 10h8v8H2z" /></Ico>
                  </FilterIcons>
                  <Toggle aria-label="Activar filtro" />
                </LayerRowBar>
                <LayerRowBar $h={28}>
                  <SelectBox $w={123} $dim><select aria-label="Modo de fusión"><option>Normal</option></select><UpDown /></SelectBox>
                  <Percent>Opacidad:<input defaultValue="100%" disabled /></Percent>
                  <DropButton aria-label="Opacidad"><Down /></DropButton>
                </LayerRowBar>
                <LayerRowBar $h={30}>
                  Bloq.:
                  <FilterIcons $gap={8} $ml={8}>
                    <Ico s={14}><rect x="2" y="2" width="16" height="16" /><path {...F} d="M2 2h5v5H2zM12 2h5v5h-5zM7 7h5v5H7zM2 12h5v5H2zM12 12h5v5h-5z" /></Ico>
                    <BrushIcon s={16} />
                    <MoveCross />
                    <LockIcon />
                  </FilterIcons>
                  <Percent>Relleno:<input defaultValue="100%" disabled /></Percent>
                  <DropButton aria-label="Relleno"><Down /></DropButton>
                </LayerRowBar>
                <LayerList>
                  <Layer>
                    <Eye aria-label="Visibilidad"><Ico s={14}><path d="M1 10c4-6 14-6 18 0-4 6-14 6-18 0z" strokeWidth="1.700" /><circle {...F} cx="10" cy="9.500" r="3.500" /></Ico></Eye>
                    <Thumb />
                    <LayerName>Fondo</LayerName>
                    <LayerLock><LockIcon outline /></LayerLock>
                  </Layer>
                </LayerList>
                <LayerFooter>
                  <Ico s={15}><path d="M9 6H5a4 4 0 0 0 0 8h4M11 6h4a4 4 0 0 1 0 8h-4M6 10h8" strokeWidth="1.600" /></Ico>
                  <Fx>fx</Fx>
                  <Ico s={15}><path fill="#d0d0d2" stroke="none" fillRule="evenodd" d="M1 4h18v13H1zM10 7a3.500 3.500 0 1 0 0 7 3.500 3.500 0 0 0 0-7z" /></Ico>
                  <Ico w={17} h={15} vb="0 0 23 20"><circle cx="9" cy="9" r="7" stroke="#d0d0d2" strokeWidth="1.600" /><path fill="#d0d0d2" stroke="none" d="M14 4 4 14A7 7 0 0 1 14 4zM19 15h3v3h-3z" /></Ico>
                  <Ico s={15}><path fill="#c4c4c6" stroke="none" d="M2 3h7l1 3h8v11H2z" /></Ico>
                  <Ico s={15}><path fill="#d0d0d2" stroke="none" d="M3 3h14v14h-5V9H3zM4 11h6v6z" /></Ico>
                  <Ico s={15}><path d="M3 5h14M8 5V3h4v2M4.500 7l1 11h9l1-11M8 8v8M10 8v8M12 8v8" /></Ico>
                </LayerFooter>
              </Panel>
            </PanelDock>
          </Dock>
        </Workspace>

        <Taskbar>
          <StartButton aria-label="Inicio">
            <svg width="38" height="35" viewBox="0 0 38 36">
              <defs>
                <radialGradient id="orb" cx=".5" cy=".9" r=".9"><stop stopColor="#58e0f5" /><stop offset=".45" stopColor="#1f6fae" /><stop offset="1" stopColor="#1b3f6e" /></radialGradient>
                <linearGradient id="gloss" x2="0" y2="1"><stop stopColor="#fff" stopOpacity=".75" /><stop offset="1" stopColor="#fff" stopOpacity=".1" /></linearGradient>
              </defs>
              <circle cx="19" cy="18" r="17.500" fill="url(#orb)" stroke="#34506c" />
              <path d="M4 15a15.500 15.500 0 0 1 30 0c-9 4-21 4-30 0z" fill="url(#gloss)" />
              <path d="M11 9.500c3-1.500 5.500-1 8 .3L17.300 17c-2.300-1.200-5-1.500-8 0z" fill="#f0592b" />
              <path d="M20 10.300c3 1.500 5.500 1.300 8.500 0l-1.800 7.300c-3 1.200-5.500 1-8.300-.2z" fill="#8dc63f" />
              <path d="M9 18.300c3-1.300 5.500-1 8 .2l-1.800 7.300c-2.300-1-5-1.300-8 0z" fill="#35a3e8" />
              <path d="M18 18.800c3 1.300 5.500 1.200 8.500 0l-1.800 7.400c-3 1.200-5.500 1-8.500 0z" fill="#fdc52c" />
            </svg>
          </StartButton>
          <TaskButton aria-label="Spotify">
            <svg width="17" height="17" viewBox="0 0 20 20"><circle cx="10" cy="10" r="9.500" fill="#6dbe4b" /><path d="M4 7c4-1.500 9-1 12.500 1M5 10.500c3.500-1 7-.7 10 1M5.500 13.500c3-.8 6-.4 8.500 1" fill="none" stroke="#1d2a18" strokeWidth="1.800" strokeLinecap="round" /></svg>
          </TaskButton>
          <TaskButton aria-label="Firefox">
            <svg width="16" height="16" viewBox="0 0 20 20"><circle cx="10" cy="10" r="9.500" fill="#e8622a" /><circle cx="11" cy="8" r="6.500" fill="#2a6cb5" /><path d="M1 5c2 1 4 1 6 1-1 2 1 3 4 3-2 2-3 3-1 4 3 1 6-1 6-5 3 5-1 11-6 11C3 19 0 12 1 5z" fill="#e5432a" /><path d="M17 4c3 4 3 9-1 13 2-5 2-9 1-13z" fill="#fbc73c" /></svg>
          </TaskButton>
          <TaskButton $stack aria-label="Acrobat">
            <svg width="17" height="17" viewBox="0 0 20 20"><path d="M1 1h14l4 4v14H1z" fill="#fff" stroke="#77767b" /><path d="M1 1h3v18H1z" fill="#555" /><path d="M5 16c4-3 6-8 5-12-2 0 1 8 8 9-5-1-9 0-13 3z" fill="none" stroke="#d4213a" strokeWidth="1.500" /></svg>
          </TaskButton>
          <TaskButton aria-label="Explorador">
            <svg width="18" height="17" viewBox="0 0 20 19"><path d="M1 2h6l1 2h11v12H1z" fill="#d9bd5c" /><path d="M3 5h15v5H3z" fill="#fdf6d2" /><path d="M1 8h18v8H1z" fill="#efd684" /><path d="M3 18v-6c0-3 14-3 14 0v6h-4v-4H7v4z" fill="#42b3dc" /></svg>
          </TaskButton>
          <TaskButton aria-label="Illustrator"><AppTile $bg="#3a1a08" $fg="#f39a2d">Ai</AppTile></TaskButton>
          <TaskButton aria-label="Photoshop"><AppTile $bg="#1b2f7c" $fg="#5bb7ea">Ps</AppTile></TaskButton>
          <Tray>
            <svg width="9" height="6" viewBox="0 0 9 6"><path d="M0 5.500 4.500 0 9 5.500z" fill="#fff" stroke="#77767b" strokeWidth=".6" /></svg>
            <svg width="19" height="17" viewBox="0 0 20 18"><path d="M6 0 0 4l4 3-4 3 6 4 4-3 4 3 6-4-4-3 4-3-6-4-4 3z" fill="#1f9bd7" /><path d="m10 4-5 3 5 3 5-3z" fill="#e9f6fc" /><path d="m5 13 5 3 5-3-5-3z" fill="#63bde6" /><circle cx="14.500" cy="13" r="4.800" fill="#2f9b4a" /><path d="m12 13 2 2 3-4" fill="none" stroke="#fff" strokeWidth="1.500" /></svg>
            <svg width="15" height="16" viewBox="0 0 15 16"><path d="M1 2h6v12H1zM3 0h2v2H3z" fill="#fff" stroke="#333" /><path d="M7 5h7v3c0 3-2 3-2.500 3v4h-2v-4C8 11 7 10 7 8zM8.500 1v4M12.500 1v4" fill="#fff" stroke="#333" /></svg>
            <svg width="17" height="14" viewBox="0 0 16 14"><path d="M.5 10.500h2v3h-2zM3.500 8.500h2v5h-2zM6.500 6h2v7.500h-2zM9.500 3.500h2v10h-2zM12.500.5h2v13h-2z" fill="#fff" stroke="#77767b" strokeWidth=".7" /></svg>
            <svg width="16" height="15" viewBox="0 0 16 15"><path d="M1 5h3l4-4v13l-4-4H1z" fill="#fff" stroke="#555" strokeWidth=".8" /><path d="M10.500 4.500c1.500 2 1.500 4 0 6" fill="none" stroke="#fff" strokeWidth="1.500" /></svg>
            <Clock>19:04</Clock>
            <ShowDesktop aria-label="Mostrar escritorio" />
          </Tray>
        </Taskbar>
      </AppWindow>
    </>
  );
}
